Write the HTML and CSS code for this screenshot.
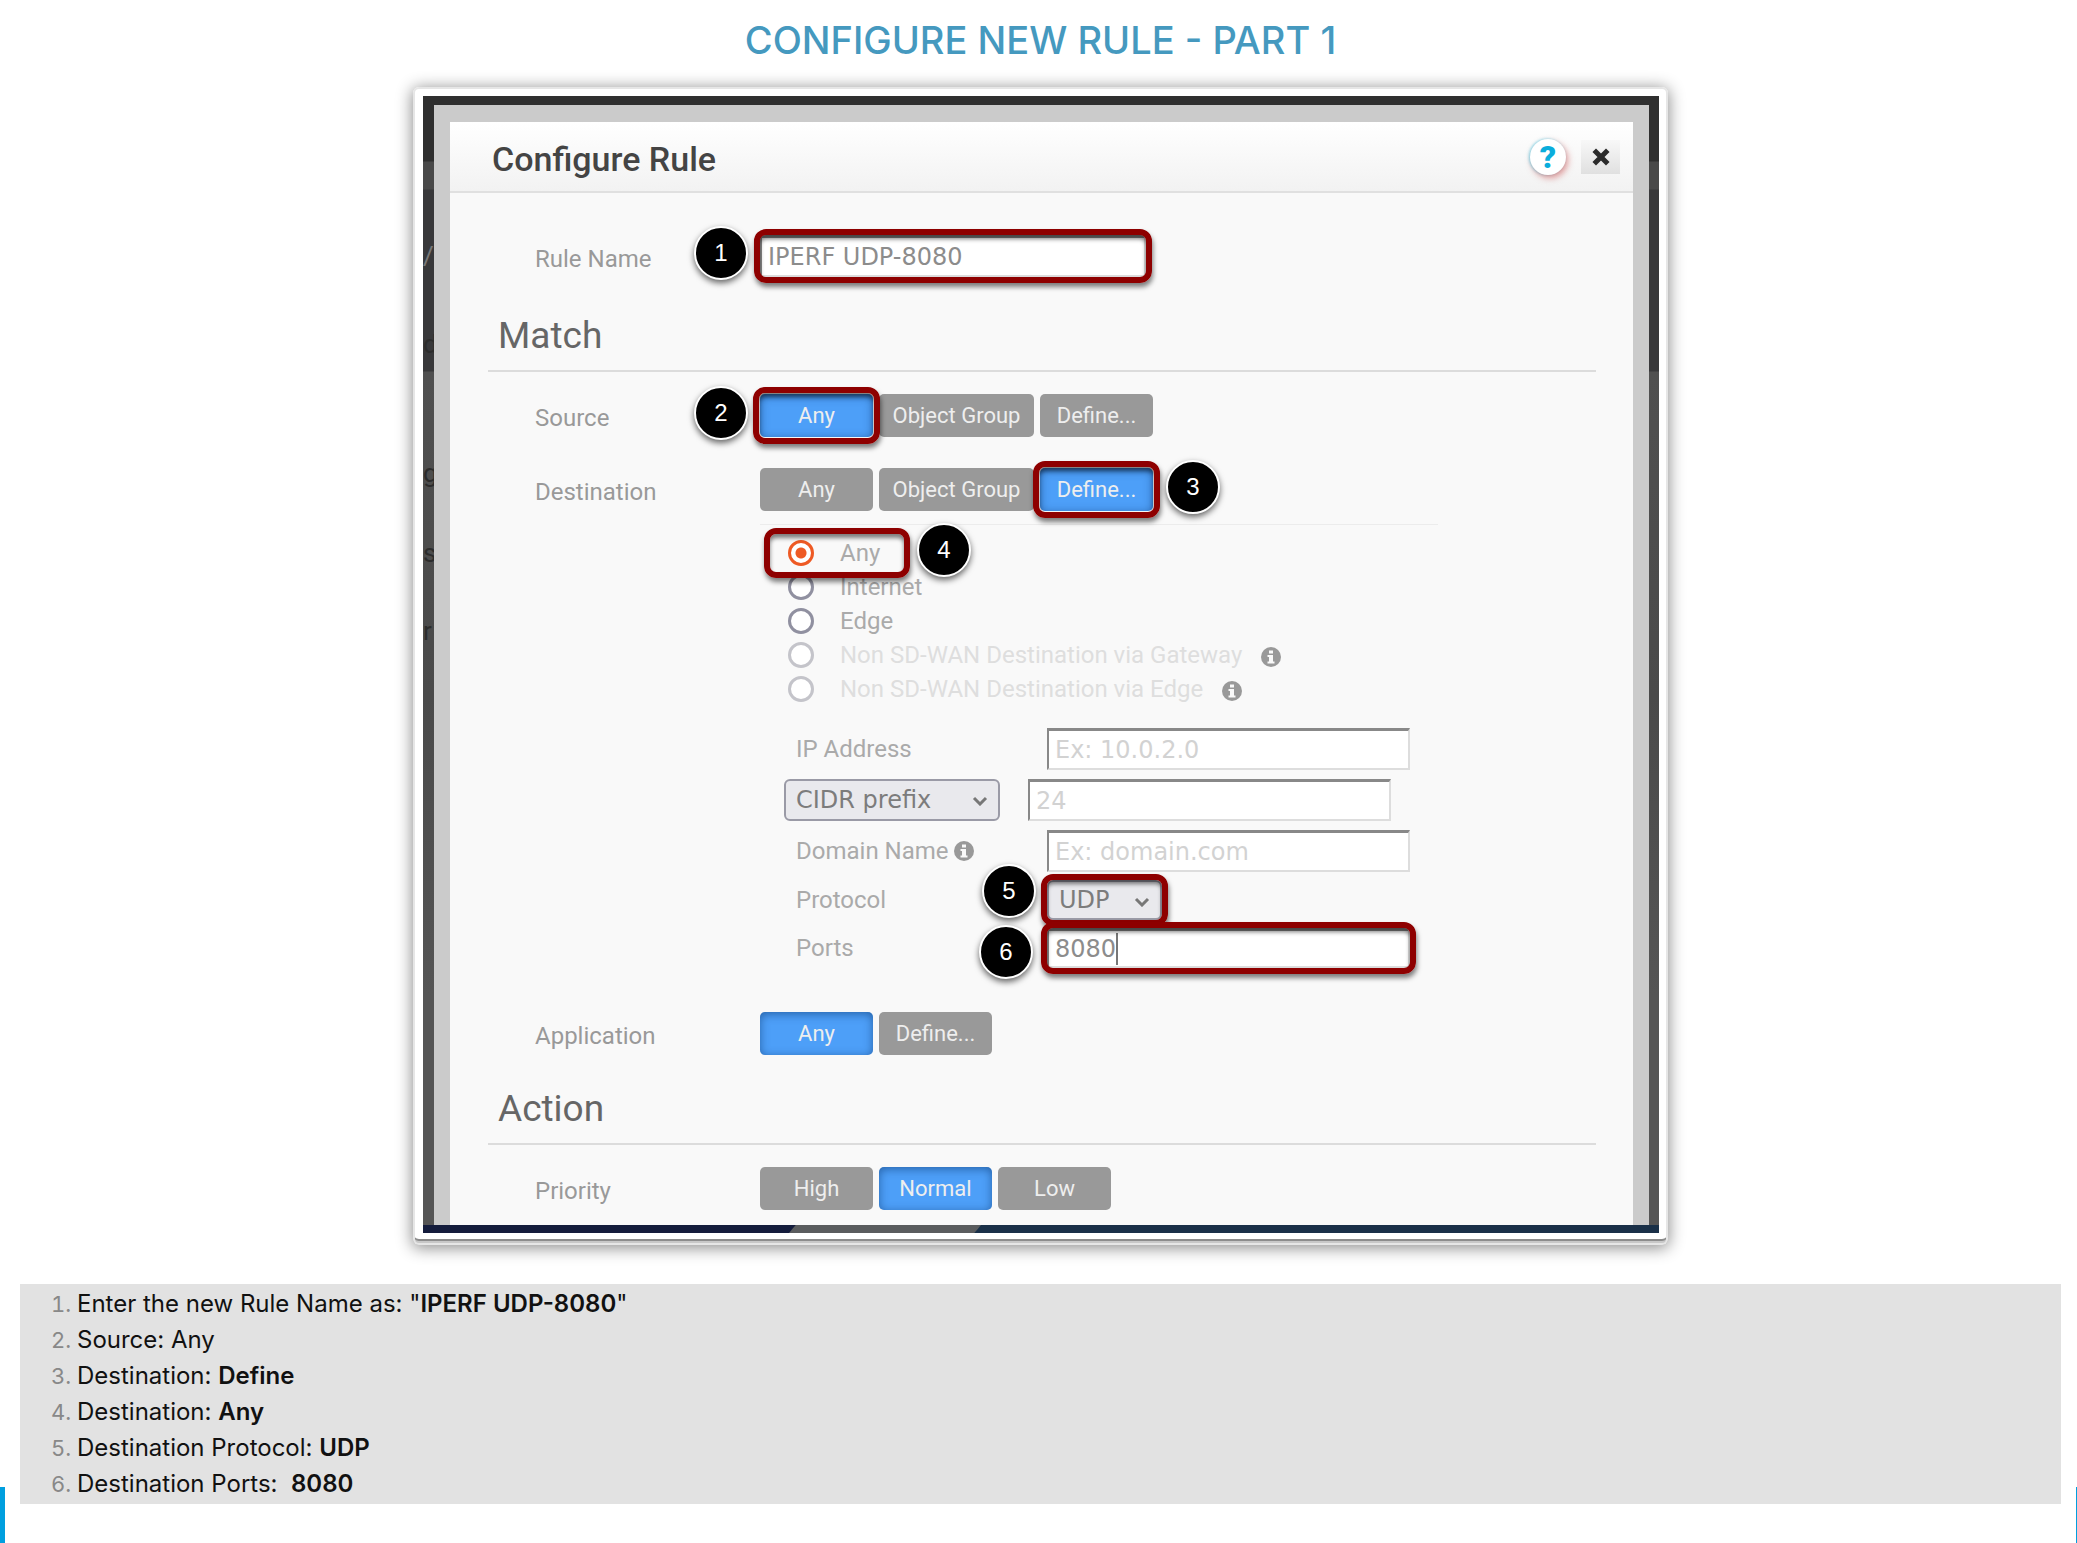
FILE: index.html
```html
<!DOCTYPE html>
<html lang="en">
<head>
<meta charset="utf-8">
<title>Configure New Rule - Part 1</title>
<link rel="stylesheet" href="styles.css">
</head>
<body>
<svg class="defs" aria-hidden="true">
  <symbol id="info" viewBox="0 0 20 20">
    <circle cx="10" cy="10" r="10" fill="#999"/>
    <path d="M8 3.500h4v3H8zM6.500 8H12v6.500h1.500v2h-7v-2H8V10H6.500z" fill="#f9f9f9"/>
  </symbol>
  <symbol id="chevron" viewBox="0 0 16 10">
    <path d="M2 2l6 6 6-6" fill="none" stroke="#777" stroke-width="3"/>
  </symbol>
</svg>
<main class="page">
  <h1 class="page-title">CONFIGURE NEW RULE - PART 1</h1>

  <div class="figure">
    <div class="backdrop">
      <div class="ghosts" aria-hidden="true">
        <span class="ghost ghost-1">/</span>
        <span class="ghost ghost-2">d</span>
        <span class="ghost ghost-3">g</span>
        <span class="ghost ghost-4">s</span>
        <span class="ghost ghost-5">r</span>
      </div>
      <div class="frame">
        <form class="dialog">
          <header class="dialog-head">
            <h2 class="dialog-title">Configure Rule</h2>
            <button class="help" type="button" aria-label="Help">?</button>
            <button class="close" type="button" aria-label="Close">
              <svg width="18" height="18" viewBox="0 0 18 18"><path d="M4 4l10 10M14 4L4 14" stroke="#2b2b2b" stroke-width="5" stroke-linecap="square"/></svg>
            </button>
          </header>
          <div class="dialog-body">
            <div class="row row-name">
              <label class="label" for="rule-name">Rule Name</label>
              <div class="mark">
                <input class="text-box name-box" id="rule-name" type="text" value="IPERF UDP-8080">
                <span class="ring ring-tight"></span><span class="badge badge-left">1</span>
              </div>
            </div>

            <h3 class="section">Match</h3>
            <div class="row">
              <span class="label">Source</span>
              <div class="choices">
                <div class="mark">
                  <button class="choice on" type="button">Any</button>
                  <span class="ring"></span><span class="badge badge-left">2</span>
                </div>
                <button class="choice wide" type="button">Object Group</button>
                <button class="choice" type="button">Define...</button>
              </div>
            </div>
            <div class="row row-next">
              <span class="label">Destination</span>
              <div class="choices">
                <button class="choice" type="button">Any</button>
                <button class="choice wide" type="button">Object Group</button>
                <div class="mark">
                  <button class="choice on" type="button">Define...</button>
                  <span class="ring"></span><span class="badge badge-right">3</span>
                </div>
              </div>
            </div>

            <div class="details">
              <div class="radios">
                <div class="mark mark-radio">
                  <label class="radio"><input type="radio" name="dest" checked>Any</label>
                  <span class="ring"></span><span class="badge badge-right">4</span>
                </div>
                <label class="radio"><input type="radio" name="dest">Internet</label>
                <label class="radio"><input type="radio" name="dest">Edge</label>
                <label class="radio off"><input type="radio" name="dest" disabled>Non SD-WAN Destination via Gateway<svg class="info info-far"><use href="#info"/></svg></label>
                <label class="radio off"><input type="radio" name="dest" disabled>Non SD-WAN Destination via Edge<svg class="info info-far"><use href="#info"/></svg></label>
              </div>
              <div class="field">
                <label class="field-label" for="ip">IP Address</label>
                <input class="text-box" id="ip" type="text" placeholder="Ex: 10.0.2.0">
              </div>
              <div class="field">
                <div class="select cidr">
                  <select aria-label="Mask type"><option>CIDR prefix</option></select>
                  <svg class="chevron"><use href="#chevron"/></svg>
                </div>
                <input class="text-box" type="text" aria-label="Mask" placeholder="24">
              </div>
              <div class="field">
                <label class="field-label" for="domain">Domain Name<svg class="info"><use href="#info"/></svg></label>
                <input class="text-box" id="domain" type="text" placeholder="Ex: domain.com">
              </div>
              <div class="field field-slim">
                <label class="field-label" for="protocol">Protocol</label>
                <div class="mark">
                  <div class="select protocol">
                    <select id="protocol"><option>UDP</option></select>
                    <svg class="chevron"><use href="#chevron"/></svg>
                  </div>
                  <span class="ring ring-tight"></span><span class="badge badge-near badge-up">5</span>
                </div>
              </div>
              <div class="field field-slim">
                <label class="field-label" for="ports">Ports</label>
                <div class="mark">
                  <input class="text-box" id="ports" type="text" value="8080">
                  <span class="caret"></span>
                  <span class="ring ring-tight"></span><span class="badge badge-near">6</span>
                </div>
              </div>
            </div>

            <div class="row">
              <span class="label">Application</span>
              <div class="choices">
                <button class="choice on" type="button">Any</button>
                <button class="choice" type="button">Define...</button>
              </div>
            </div>

            <h3 class="section">Action</h3>
            <div class="row">
              <span class="label">Priority</span>
              <div class="choices">
                <button class="choice" type="button">High</button>
                <button class="choice on" type="button">Normal</button>
                <button class="choice" type="button">Low</button>
              </div>
            </div>
          </div>
        </form>
      </div>
      <div class="strip"></div>
    </div>
  </div>

  <ol class="steps">
    <li>Enter the new Rule Name as: "<b>IPERF UDP-8080</b>"</li>
    <li>Source: Any</li>
    <li>Destination: <b>Define</b></li>
    <li>Destination: <b>Any</b></li>
    <li>Destination Protocol: <b>UDP</b></li>
    <li>Destination Ports: &nbsp;<b>8080</b></li>
  </ol>
  <span class="edge edge-left"></span>
  <span class="edge edge-right"></span>
</main>
</body>
</html>
```
FILE: styles.css
```css
* { box-sizing: border-box; }
body { margin: 0; background: #fff; font-family: Inter, sans-serif; }
h1, h2, h3, ol { margin: 0; padding: 0; font-weight: 400; }
button, input, select { font: inherit; margin: 0; }
.defs { display: none; }

.page { position: relative; min-height: 100vh; padding: 16px 16px 38px 20px; overflow: hidden; }
.page-title { color: #4599bf; font-size: 38px; font-weight: 500; line-height: 48px; text-align: center; }

.figure {
  max-width: 1255px; margin: 23px auto 39px; padding: 9px 9px 12px 10px;
  background: #fff; border-radius: 6px;
  box-shadow: 0 2px 16px 1px rgba(0, 0, 0, .45), inset 0 0 0 2px #e6e6e6, inset 0 -4px #c8c8c8, inset 0 -6px #8c8c8c;
}
.backdrop {
  position: relative; padding-top: 9px;
  background: linear-gradient(#2f2f2f 65px, #494949 66px, #494949 93px, #38383a 94px, #38383a 275px, #505050 276px, #4a4a4a 600px, #555 900px);
}
.ghosts { position: absolute; top: 0; left: 0; width: 11px; height: 100%; overflow: hidden; }
.ghost { position: absolute; left: 0; color: #2c2c2c; font: 26px/30px Roboto, sans-serif; }
.ghost-1 { top: 145px; color: #777; }
.ghost-2 { top: 233px; }
.ghost-3 { top: 362px; }
.ghost-4 { top: 442px; }
.ghost-5 { top: 520px; }
.frame { position: relative; margin: 0 10px 0 11px; padding: 17px 16px 0; background: #cbcbcb; }
.strip {
  height: 8px;
  background: linear-gradient(130deg, #141c3c 285px, #5a5c5e 286px, #5a5c5e 427px, #1a3048 428px);
}

.dialog { background: #f9f9f9; color: #999; font-family: Roboto, sans-serif; font-size: 24px; }
.dialog-head {
  display: flex; align-items: center; height: 71px; padding: 0 13px 0 42px;
  background: linear-gradient(#fff, #f2f2f2); border-bottom: 2px solid #e0e0e0;
}
.dialog-title { flex: 1; color: #444; font-size: 34px; font-weight: 500; line-height: 40px; padding-top: 4px; }
.help {
  width: 36px; height: 36px; margin-right: 15px; padding: 0; border: 0; border-radius: 50%;
  background: #fff; color: #0aaddc; font-size: 32px; font-weight: 900; line-height: 36px;
  box-shadow: 2px 3px 6px rgba(200, 60, 60, .5), -1px 0 3px rgba(0, 190, 230, .5);
}
.close {
  display: grid; place-items: center; width: 39px; height: 34px; padding: 0; border: 0;
  background: linear-gradient(#f8f8f8, #e0e0e0);
}
.dialog-body { padding: 42px 37px 15px 38px; }

.row { display: flex; padding-left: 47px; }
.row-name { padding-bottom: 5px; }
.row-next { margin-top: 31px; }
.label { width: 225px; padding-top: 8px; line-height: 32px; }
.section {
  margin: 32px 0 22px; padding: 0 10px 12px; border-bottom: 2px solid #dcdcdc;
  color: #666; font-size: 37px; line-height: 44px;
}
.choices { display: flex; gap: 6px; }
.choice {
  display: block; width: 113px; height: 43px; padding: 0; border: 0; border-radius: 5px;
  background: #999; color: #eee; font-size: 22px; line-height: 43px;
}
.wide { width: 155px; }
.on { background: #4d9ff8; box-shadow: inset 0 2px 10px rgba(0, 40, 90, .5); }

.mark { position: relative; }
.ring {
  position: absolute; inset: -7px; border: 6px solid #8e0000; border-radius: 12px; pointer-events: none;
  box-shadow: 1px 4px 5px rgba(0, 0, 0, .5), inset 0 4px 4px rgba(0, 0, 0, .5);
}
.ring-tight { inset: -6px; }
.badge {
  position: absolute; top: 50%; width: 54px; height: 54px; margin-top: -30px;
  border: 2px solid #fff; border-radius: 50%; background: #000; color: #fff;
  font: 24px/50px "Liberation Sans", sans-serif; text-align: center;
  box-shadow: 0 3px 6px rgba(0, 0, 0, .6);
}
.badge-left { right: 100%; margin-right: 12px; }
.badge-right { left: 100%; margin-left: 13px; }
.badge-near { right: 100%; margin-right: 14px; margin-top: -23px; }
.badge-up { margin-right: 11px; margin-top: -36px; }

.text-box {
  display: block; width: 363px; height: 42px; padding: 0 6px; border: 2px solid #ddd;
  border-top: 3px solid #888; border-left-color: #888; border-radius: 0; background: #fff;
  color: #8c8c8c; font-family: "DejaVu Sans", sans-serif;
}
.text-box::placeholder { color: #d2d2d2; opacity: 1; }
.name-box { width: 386px; }
.caret { position: absolute; left: 69px; top: 5px; width: 2px; height: 32px; background: #777; }

.details { width: 678px; margin: 13px 0 44px 272px; padding: 11px 0 0 24px; border-top: 1px solid #ececec; }
.radios { margin-bottom: 22px; }
.radio { display: flex; align-items: center; height: 34px; padding-left: 4px; color: #aaa; }
.radio input {
  appearance: none; width: 26px; height: 26px; margin-right: 26px;
  border: 3px solid #9090a0; border-radius: 50%; background: #fff;
}
.radio input:checked { border-color: #ee5a24; background: radial-gradient(#ee5a24 5px, #fff 6px); }
.off { color: #dedede; }
.radio.off input { border-color: #c4c4ca; }
.mark-radio { width: 120px; z-index: 1; }
.mark-radio .ring { inset: -8px -6px -8px -20px; }
.info { width: 20px; height: 20px; margin-left: 5px; }
.info-far { margin-left: 19px; margin-top: 4px; }

.field { display: flex; height: 42px; margin-top: 9px; }
.field-slim { height: 40px; }
.field-label { display: flex; align-items: center; width: 263px; padding-left: 12px; color: #aaa; }
.field-slim .text-box, .field-slim .select { height: 40px; }
.field-slim { margin-top: 8px; }
.select { position: relative; height: 42px; }
.select select {
  appearance: none; width: 100%; height: 100%; padding: 0 10px; border: 2px solid #9a9aa6;
  border-radius: 6px; background: #e9e9ed; color: #7c7c7c; font-family: "DejaVu Sans", sans-serif;
}
.chevron { position: absolute; right: 12px; top: 17px; width: 16px; height: 10px; pointer-events: none; }
.cidr { width: 216px; margin-right: 28px; }
.protocol { width: 115px; }

.steps {
  padding: 2px 0 2px 57px; background: #e2e2e2; color: #111; font-size: 24px; line-height: 36px;
}
.steps li::marker { color: #888; font-size: 22px; }
.steps b { font-weight: 600; }
.edge { position: absolute; bottom: 0; height: 56px; background: #009fdf; }
.edge-left { left: 0; width: 5px; }
.edge-right { right: 0; width: 1px; }
```
